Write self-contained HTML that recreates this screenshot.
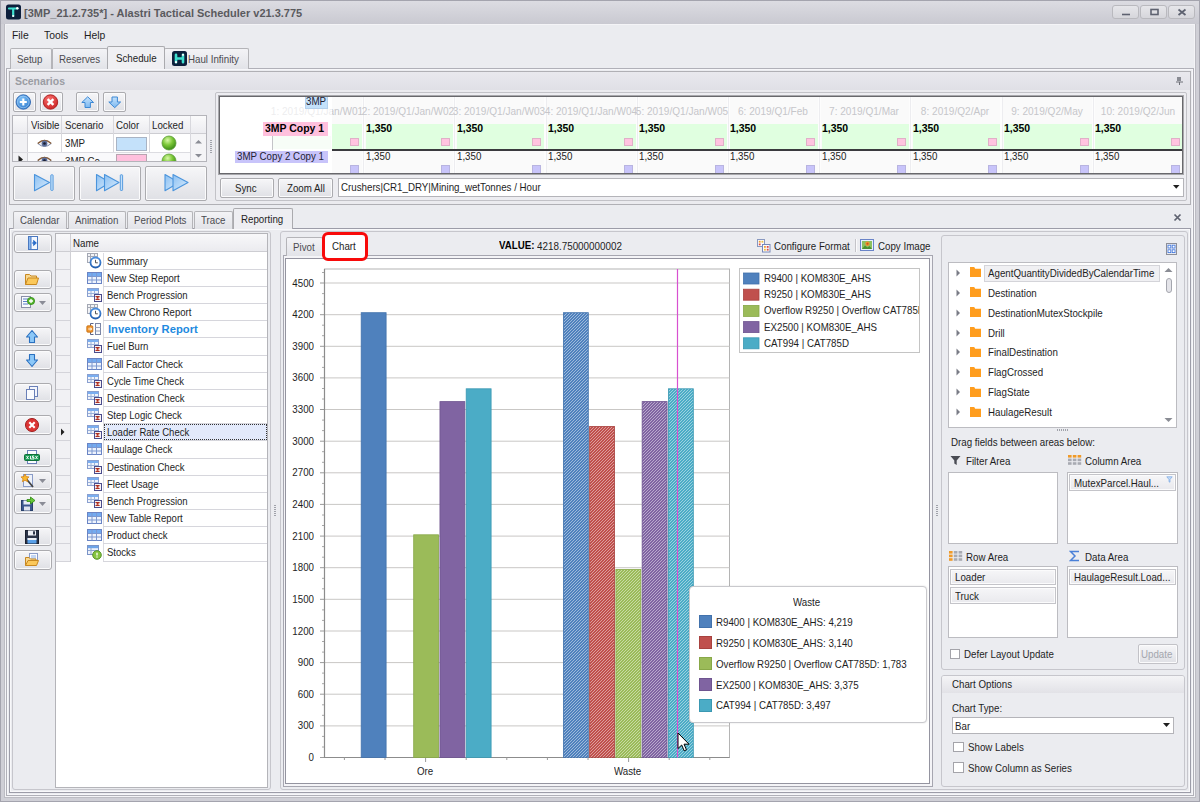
<!DOCTYPE html>
<html><head><meta charset="utf-8"><title>Alastri Tactical Scheduler</title>
<style>
*{box-sizing:border-box;margin:0;padding:0}
html,body{width:1200px;height:802px;overflow:hidden}
body{background:#e9eaee;font-family:"Liberation Sans",sans-serif;font-size:11px;color:#1e1e1e;position:relative}
.a{position:absolute}
.t{position:absolute;white-space:nowrap;line-height:14px;height:14px;transform:scaleX(.885);transform-origin:0 0}
.li{transform:scaleX(.868)}
.tb{font-weight:bold;transform:scaleX(.95)}
.m{font-size:11.5px;transform:scaleX(.9)}
.hd{font-size:11px;transform:scaleX(.915)}
.tab{position:absolute;border:1px solid #b4b4b8;border-bottom:none;background:linear-gradient(#f3f3f6,#e2e3e8);border-radius:2px 2px 0 0}
.tab.act{background:#f0f0f3;border-color:#aaaaae}
.btn{position:absolute;border:1px solid #ababaf;border-radius:2px;background:linear-gradient(#f6f6f8,#dfe0e5);box-shadow:inset 0 0 0 1px #fbfbfc}
.white{position:absolute;background:#fff;border:1px solid #b9b9bd}
.wb{top:5px;width:27px;height:14px;border:1px solid #b9b9be;border-radius:3px;background:linear-gradient(#e6e6ea,#d6d6db)}
.ax{text-align:right;transform-origin:100% 0}
.fld{border:1px solid #c4c4c9;background:linear-gradient(#f6f6f8,#e9e9ed);box-shadow:inset 0 0 0 1px #fbfbfc}
.cb{width:10.5px;height:10.5px;border:1px solid #a4a4aa;background:#fff}
</style></head><body>
<div class="a" style="left:0;top:0;width:1200px;height:802px;background:#cfcfd6;border:1px solid #a4a4ae"></div>
<div class="a" style="left:4px;top:23px;width:1192px;height:775px;background:#ebecf0;border:1px solid #bcbcc3;box-shadow:inset 0 0 0 1px #f4f4f7"></div>
<!-- title bar -->
<div class="a" style="left:0;top:0;width:1200px;height:24px;background:linear-gradient(#dcdce2,#c9c9d1);border:1px solid #a4a4ae;border-bottom:none"></div>
<svg class="a" style="left:6px;top:4px" width="15" height="16" viewBox="0 0 15 16"><rect x="0" y="0.5" width="15" height="15" rx="2.5" fill="#0d1f3c"/><path d="M3 4.5H11.5M7.2 4.5V12" stroke="#3fe0d0" stroke-width="2.2" stroke-linecap="round" fill="none"/><circle cx="11.3" cy="4.3" r="1.2" fill="#fff"/><circle cx="7.2" cy="12" r="1.1" fill="#fff"/></svg>
<div class="t" style="left:24px;top:6px;font-weight:bold;color:#5a5a5e;font-size:11px;transform:none">[3MP_21.2.735*] - Alastri Tactical Scheduler v21.3.775</div>
<div class="a wb" style="left:1112px"><svg width="26" height="14"><path d="M9 8.5h8" stroke="#5e6270" stroke-width="1.6"/></svg></div>
<div class="a wb" style="left:1140px"><svg width="26" height="14"><rect x="10" y="3.5" width="7" height="5" fill="none" stroke="#5e6270" stroke-width="1.6"/></svg></div>
<div class="a wb" style="left:1168px"><svg width="26" height="14"><path d="M9.5 3.5l7 5.5M16.5 3.5l-7 5.5" stroke="#5e6270" stroke-width="1.8"/></svg></div>
<!-- menu -->
<div class="t m" style="left:12px;top:27.500px">File</div>
<div class="t m" style="left:44px;top:27.500px">Tools</div>
<div class="t m" style="left:84px;top:27.500px">Help</div>
<!-- main tabs -->
<div class="a" style="left:6px;top:68px;width:1188px;height:728px;border:1px solid #b0b0b8;background:#ebecf0;box-shadow:inset 0 0 0 1px #f6f6f9"></div>
<div class="tab" style="left:10px;top:48px;width:42px;height:21px"></div><div class="t" style="left:17px;top:52px;color:#4b4b50">Setup</div>
<div class="tab" style="left:52px;top:48px;width:56px;height:21px"></div><div class="t" style="left:59px;top:52px;color:#4b4b50">Reserves</div>
<div class="tab" style="left:164px;top:48px;width:85px;height:21px"></div>
<svg class="a" style="left:172px;top:51px" width="15" height="15" viewBox="0 0 15 15"><rect width="15" height="15" rx="2.5" fill="#0d1f3c"/><path d="M4 3.8v7.4M11 3.8v7.4M4 7.5h7" stroke="#3fe0d0" stroke-width="2.600" stroke-linecap="round" fill="none"/><circle cx="11" cy="3.800" r="1.100" fill="#fff"/><circle cx="4" cy="11.200" r="1.100" fill="#fff"/></svg>
<div class="t" style="left:188px;top:52px;color:#4b4b50">Haul Infinity</div>
<div class="tab act" style="left:107px;top:46px;width:58px;height:23px"></div><div class="t" style="left:116px;top:51px">Schedule</div>
<!-- scenarios dock panel -->
<div class="a" style="left:9px;top:71px;width:1182px;height:134px;border:1px solid #b0b0b5;background:#ebebef"></div>
<div class="a" style="left:10px;top:72px;width:1180px;height:18px;background:linear-gradient(#e9e9ee,#e0e0e6)"></div>
<div class="t tb" style="left:15px;top:74px;color:#9a9ca3">Scenarios</div>
<svg class="a" style="left:1174.500px;top:76px" width="9" height="10"><rect x="2" y="1" width="4" height="4" fill="#8a8c94"/><path d="M1 6h7M4.5 6v3" stroke="#6e7078" stroke-width="1"/></svg>
<!-- small buttons -->
<svg width="0" height="0" style="position:absolute"><defs>
<linearGradient id="ab" x1="0" y1="0" x2="0" y2="1"><stop offset="0" stop-color="#c4e2fc"/><stop offset="1" stop-color="#7cb8f0"/></linearGradient>
<linearGradient id="pb" x1="0" y1="0" x2="1" y2="1"><stop offset="0" stop-color="#8cc0f2"/><stop offset="1" stop-color="#d8ecfd"/></linearGradient>
<radialGradient id="bl" cx=".4" cy=".3" r=".8"><stop offset="0" stop-color="#7cc0f8"/><stop offset="1" stop-color="#2a74c8"/></radialGradient>
<radialGradient id="rd" cx=".4" cy=".3" r=".8"><stop offset="0" stop-color="#f87070"/><stop offset="1" stop-color="#c81c1c"/></radialGradient>
<radialGradient id="gg" cx=".4" cy=".3" r=".7"><stop offset="0" stop-color="#d8f8a8"/><stop offset=".5" stop-color="#7cc838"/><stop offset="1" stop-color="#3c8c18"/></radialGradient>
</defs></svg>
<div class="btn" style="left:13px;top:92px;width:23px;height:20px"></div>
<svg class="a" style="left:15px;top:94px" width="17" height="17" viewBox="0 0 17 17"><circle cx="8.300" cy="8" r="7.200" fill="url(#bl)" stroke="#2a64b0" stroke-width=".9"/><circle cx="8.300" cy="8" r="5.800" fill="none" stroke="#b8dcfc" stroke-width=".7" opacity=".8"/><path d="M4.800 8h7M8.300 4.500v7" stroke="#fff" stroke-width="2.100"/></svg>
<div class="btn" style="left:40px;top:92px;width:23px;height:20px"></div>
<svg class="a" style="left:42px;top:94px" width="17" height="17" viewBox="0 0 17 17"><circle cx="8.500" cy="8" r="7.200" fill="url(#rd)" stroke="#a81818" stroke-width=".9"/><path d="M5.600 5.100l5.800 5.800M11.400 5.100l-5.800 5.800" stroke="#fff" stroke-width="2.300"/></svg>
<div class="btn" style="left:76px;top:92px;width:23px;height:20px"></div>
<svg class="a" style="left:81px;top:96px" width="14" height="13" viewBox="0 0 14 13"><path d="M6.700 .8L12.600 6.500H9.400V11.500H4V6.500H.8Z" fill="url(#ab)" stroke="#3c88d4" stroke-width="1" stroke-linejoin="round"/></svg>
<div class="btn" style="left:103px;top:92px;width:23px;height:20px"></div>
<svg class="a" style="left:108px;top:96px" width="14" height="13" viewBox="0 0 14 13"><path d="M6.700 11.700L12.600 6H9.400V1H4V6H.8Z" fill="url(#ab)" stroke="#3c88d4" stroke-width="1" stroke-linejoin="round"/></svg>
<!-- scenario grid -->
<div class="a" style="left:12px;top:115px;width:195px;height:46.500px;border:1px solid #b4b4ba;background:#fff;overflow:hidden">
 <div class="a" style="left:0;top:0;width:193px;height:18px;background:linear-gradient(#fafafb,#ececf0);border-bottom:1px solid #cdcdd2"></div>
 <div class="a" style="left:0;top:18px;width:14px;height:30px;background:#f1f1f4"></div>
 <div class="a" style="left:14px;top:0;width:1px;height:47px;background:#d0d0d5"></div>
 <div class="a" style="left:48px;top:0;width:1px;height:47px;background:#d8d8dd"></div>
 <div class="a" style="left:100px;top:0;width:1px;height:47px;background:#d8d8dd"></div>
 <div class="a" style="left:136px;top:0;width:1px;height:47px;background:#d8d8dd"></div>
 <div class="a" style="left:177px;top:0;width:1px;height:47px;background:#d8d8dd"></div>
 <div class="a" style="left:0;top:35.500px;width:177px;height:1px;background:#dcdce1"></div>
 <div class="a" style="left:178px;top:18px;width:15px;height:29px;background:#f4f4f6"></div>
 <div class="a" style="left:15px;top:36.500px;width:162px;height:11px;background:#f9f9fb"></div>
 <div class="t" style="left:18px;top:2px">Visible</div>
 <div class="t" style="left:52px;top:2px">Scenario</div>
 <div class="t" style="left:103px;top:2px">Color</div>
 <div class="t" style="left:139px;top:2px">Locked</div>
 <div class="t" style="left:52px;top:20px">3MP</div>
 <div class="t" style="left:52px;top:37.500px">3MP Co...</div>
 <div class="a" style="left:103px;top:20.500px;width:31px;height:14px;background:#c4e1fa;border:1px solid #a9b4c4"></div>
 <div class="a" style="left:103px;top:38px;width:31px;height:14px;background:#ffc0dd;border:1px solid #b8a4b0"></div>
 <svg class="a" style="left:24px;top:21.500px" width="15" height="11" viewBox="0 0 15 11"><path d="M.8 5.500Q7.500 -.8 14.200 5.500Q7.500 11.500 .8 5.500Z" fill="#f4f4f8" stroke="#7a88a8" stroke-width="1"/><path d="M.8 5.500Q7.500 -.8 14.200 5.500" fill="none" stroke="#8a5c34" stroke-width="1.300"/><circle cx="7.500" cy="5.500" r="2.900" fill="#5a6c98"/><circle cx="7.500" cy="5.500" r="1.300" fill="#1a1e30"/></svg>
 <svg class="a" style="left:24px;top:39px" width="15" height="11" viewBox="0 0 15 11"><path d="M.8 5.500Q7.500 -.8 14.200 5.500Q7.500 11.500 .8 5.500Z" fill="#f4f4f8" stroke="#7a88a8" stroke-width="1"/><path d="M.8 5.500Q7.500 -.8 14.200 5.500" fill="none" stroke="#8a5c34" stroke-width="1.300"/><circle cx="7.500" cy="5.500" r="2.900" fill="#5a6c98"/><circle cx="7.500" cy="5.500" r="1.300" fill="#1a1e30"/></svg>
 <svg class="a" style="left:148px;top:19px" width="16" height="16"><circle cx="8" cy="8" r="7" fill="url(#gg)" stroke="#5c9c38" stroke-width=".8"/></svg>
 <svg class="a" style="left:148px;top:36.500px" width="16" height="16"><circle cx="8" cy="8" r="7" fill="url(#gg)" stroke="#5c9c38" stroke-width=".8"/></svg>
 <svg class="a" style="left:4px;top:38.500px" width="8" height="9"><path d="M1.500 .5L6 4.500L1.500 8.500Z" fill="#222"/></svg>
 <svg class="a" style="left:181px;top:21px" width="9" height="24"><path d="M1 6.500L4.500 3L8 6.500Z" fill="#8a8c94"/><path d="M1 17L4.500 20.500L8 17Z" fill="#8a8c94"/></svg>
</div>
<!-- big play buttons -->
<div class="btn" style="left:13px;top:165.500px;width:62px;height:35.500px"></div>
<svg class="a" style="left:13px;top:166px" width="62" height="34" viewBox="0 0 62 34"><path d="M21.500 8.500L36.500 16.500L21.500 24.700Z" fill="url(#pb)" stroke="#4a94dc" stroke-width="1.100" stroke-linejoin="round"/><rect x="37.800" y="8.800" width="2.300" height="15.600" rx=".6" fill="#c4e0fa" stroke="#4a94dc" stroke-width=".9"/></svg>
<div class="btn" style="left:78.500px;top:165.500px;width:62.500px;height:35.500px"></div>
<svg class="a" style="left:79px;top:166px" width="62" height="34" viewBox="0 0 62 34"><path d="M17.500 8.500L31 16.500L17.500 24.700Z" fill="url(#pb)" stroke="#4a94dc" stroke-width="1.100" stroke-linejoin="round"/><path d="M25.500 8.500L40 16.500L25.500 24.700Z" fill="url(#pb)" stroke="#4a94dc" stroke-width="1.100" stroke-linejoin="round"/><rect x="41.300" y="8.800" width="2.300" height="15.600" rx=".6" fill="#c4e0fa" stroke="#4a94dc" stroke-width=".9"/></svg>
<div class="btn" style="left:144.500px;top:165.500px;width:62.500px;height:35.500px"></div>
<svg class="a" style="left:145px;top:166px" width="62" height="34" viewBox="0 0 62 34"><path d="M20 8.500L34 16.500L20 24.700Z" fill="url(#pb)" stroke="#4a94dc" stroke-width="1.100" stroke-linejoin="round"/><path d="M28 8.500L43 16.500L28 24.700Z" fill="url(#pb)" stroke="#4a94dc" stroke-width="1.100" stroke-linejoin="round"/></svg>
<!-- splitter dots -->
<div class="a" style="left:210px;top:140px;width:2px;height:13px;background:repeating-linear-gradient(#a0a2aa 0 1px,transparent 1px 2px)"></div>
<!-- right box -->
<div class="a" style="left:215px;top:92px;width:972px;height:109px;border:1px solid #c2c2c7;background:#ededf1;border-radius:2px"></div>
<div class="a" id="tl" style="left:218px;top:95px;width:966px;height:80px;border:1px solid #a8a8ac;background:#fff;overflow:hidden">
<div class="a" style="left:112.5px;top:1.0px;width:853.0px;height:76px;background:#fafafa;"></div>
<div class="a" style="left:112.5px;top:28.0px;width:30.5px;height:24.5px;background:#e0ffe0;"></div>
<div class="a" style="left:143.0px;top:1.0px;width:3.0px;height:76px;background:#fdfdfd;"></div>
<div class="a" style="left:144.2px;top:1.0px;width:1.0px;height:76px;background:#ededf0;"></div>
<div class="a" style="left:146.5px;top:28.0px;width:87.7px;height:24.5px;background:#e0ffe0;"></div>
<div class="a" style="left:234.2px;top:1.0px;width:3.0px;height:76px;background:#fdfdfd;"></div>
<div class="a" style="left:235.4px;top:1.0px;width:1.0px;height:76px;background:#ededf0;"></div>
<div class="a" style="left:237.7px;top:28.0px;width:87.7px;height:24.5px;background:#e0ffe0;"></div>
<div class="a" style="left:325.4px;top:1.0px;width:3.0px;height:76px;background:#fdfdfd;"></div>
<div class="a" style="left:326.6px;top:1.0px;width:1.0px;height:76px;background:#ededf0;"></div>
<div class="a" style="left:328.9px;top:28.0px;width:87.7px;height:24.5px;background:#e0ffe0;"></div>
<div class="a" style="left:416.6px;top:1.0px;width:3.0px;height:76px;background:#fdfdfd;"></div>
<div class="a" style="left:417.8px;top:1.0px;width:1.0px;height:76px;background:#ededf0;"></div>
<div class="a" style="left:420.1px;top:28.0px;width:87.7px;height:24.5px;background:#e0ffe0;"></div>
<div class="a" style="left:507.8px;top:1.0px;width:3.0px;height:76px;background:#fdfdfd;"></div>
<div class="a" style="left:509.0px;top:1.0px;width:1.0px;height:76px;background:#ededf0;"></div>
<div class="a" style="left:511.3px;top:28.0px;width:87.7px;height:24.5px;background:#e0ffe0;"></div>
<div class="a" style="left:599.0px;top:1.0px;width:3.0px;height:76px;background:#fdfdfd;"></div>
<div class="a" style="left:600.2px;top:1.0px;width:1.0px;height:76px;background:#ededf0;"></div>
<div class="a" style="left:602.5px;top:28.0px;width:87.7px;height:24.5px;background:#e0ffe0;"></div>
<div class="a" style="left:690.2px;top:1.0px;width:3.0px;height:76px;background:#fdfdfd;"></div>
<div class="a" style="left:691.4px;top:1.0px;width:1.0px;height:76px;background:#ededf0;"></div>
<div class="a" style="left:693.7px;top:28.0px;width:87.7px;height:24.5px;background:#e0ffe0;"></div>
<div class="a" style="left:781.4px;top:1.0px;width:3.0px;height:76px;background:#fdfdfd;"></div>
<div class="a" style="left:782.6px;top:1.0px;width:1.0px;height:76px;background:#ededf0;"></div>
<div class="a" style="left:784.9px;top:28.0px;width:87.7px;height:24.5px;background:#e0ffe0;"></div>
<div class="a" style="left:872.6px;top:1.0px;width:3.0px;height:76px;background:#fdfdfd;"></div>
<div class="a" style="left:873.8px;top:1.0px;width:1.0px;height:76px;background:#ededf0;"></div>
<div class="a" style="left:876.1px;top:28.0px;width:87.7px;height:24.5px;background:#e0ffe0;"></div>
<div class="a" style="left:963.8px;top:1.0px;width:3.0px;height:76px;background:#fdfdfd;"></div>
<div class="a" style="left:965.0px;top:1.0px;width:1.0px;height:76px;background:#ededf0;"></div>
<div class="a" style="left:967.3px;top:28.0px;width:87.7px;height:24.5px;background:#e0ffe0;"></div>
<div class="a" style="left:1055.0px;top:1.0px;width:3.0px;height:76px;background:#fdfdfd;"></div>
<div class="a" style="left:1056.2px;top:1.0px;width:1.0px;height:76px;background:#ededf0;"></div>
<div class="t tb" style="left:146.5px;top:25px;color:#000">1,350</div>
<div class="t" style="left:146.5px;top:53px;color:#222">1,350</div>
<div class="t tb" style="left:237.7px;top:25px;color:#000">1,350</div>
<div class="t" style="left:237.7px;top:53px;color:#222">1,350</div>
<div class="t tb" style="left:328.9px;top:25px;color:#000">1,350</div>
<div class="t" style="left:328.9px;top:53px;color:#222">1,350</div>
<div class="t tb" style="left:420.1px;top:25px;color:#000">1,350</div>
<div class="t" style="left:420.1px;top:53px;color:#222">1,350</div>
<div class="t tb" style="left:511.3px;top:25px;color:#000">1,350</div>
<div class="t" style="left:511.3px;top:53px;color:#222">1,350</div>
<div class="t tb" style="left:602.5px;top:25px;color:#000">1,350</div>
<div class="t" style="left:602.5px;top:53px;color:#222">1,350</div>
<div class="t tb" style="left:693.7px;top:25px;color:#000">1,350</div>
<div class="t" style="left:693.7px;top:53px;color:#222">1,350</div>
<div class="t tb" style="left:784.9px;top:25px;color:#000">1,350</div>
<div class="t" style="left:784.9px;top:53px;color:#222">1,350</div>
<div class="t tb" style="left:876.1px;top:25px;color:#000">1,350</div>
<div class="t" style="left:876.1px;top:53px;color:#222">1,350</div>
<div class="t tb" style="left:967.3px;top:25px;color:#000">1,350</div>
<div class="t" style="left:967.3px;top:53px;color:#222">1,350</div>
<div class="a" style="left:131.0px;top:41.5px;width:9.0px;height:8.5px;background:#ffc4e0;border:1px solid #e0b0c8"></div>
<div class="a" style="left:131.0px;top:68.5px;width:9.0px;height:10px;background:#c8c4fa;border:1px solid #b8b4e0"></div>
<div class="a" style="left:222.2px;top:41.5px;width:9.0px;height:8.5px;background:#ffc4e0;border:1px solid #e0b0c8"></div>
<div class="a" style="left:222.2px;top:68.5px;width:9.0px;height:10px;background:#c8c4fa;border:1px solid #b8b4e0"></div>
<div class="a" style="left:313.4px;top:41.5px;width:9.0px;height:8.5px;background:#ffc4e0;border:1px solid #e0b0c8"></div>
<div class="a" style="left:313.4px;top:68.5px;width:9.0px;height:10px;background:#c8c4fa;border:1px solid #b8b4e0"></div>
<div class="a" style="left:404.6px;top:41.5px;width:9.0px;height:8.5px;background:#ffc4e0;border:1px solid #e0b0c8"></div>
<div class="a" style="left:404.6px;top:68.5px;width:9.0px;height:10px;background:#c8c4fa;border:1px solid #b8b4e0"></div>
<div class="a" style="left:495.8px;top:41.5px;width:9.0px;height:8.5px;background:#ffc4e0;border:1px solid #e0b0c8"></div>
<div class="a" style="left:495.8px;top:68.5px;width:9.0px;height:10px;background:#c8c4fa;border:1px solid #b8b4e0"></div>
<div class="a" style="left:587.0px;top:41.5px;width:9.0px;height:8.5px;background:#ffc4e0;border:1px solid #e0b0c8"></div>
<div class="a" style="left:587.0px;top:68.5px;width:9.0px;height:10px;background:#c8c4fa;border:1px solid #b8b4e0"></div>
<div class="a" style="left:678.2px;top:41.5px;width:9.0px;height:8.5px;background:#ffc4e0;border:1px solid #e0b0c8"></div>
<div class="a" style="left:678.2px;top:68.5px;width:9.0px;height:10px;background:#c8c4fa;border:1px solid #b8b4e0"></div>
<div class="a" style="left:769.4px;top:41.5px;width:9.0px;height:8.5px;background:#ffc4e0;border:1px solid #e0b0c8"></div>
<div class="a" style="left:769.4px;top:68.5px;width:9.0px;height:10px;background:#c8c4fa;border:1px solid #b8b4e0"></div>
<div class="a" style="left:860.6px;top:41.5px;width:9.0px;height:8.5px;background:#ffc4e0;border:1px solid #e0b0c8"></div>
<div class="a" style="left:860.6px;top:68.5px;width:9.0px;height:10px;background:#c8c4fa;border:1px solid #b8b4e0"></div>
<div class="a" style="left:951.8px;top:41.5px;width:9.0px;height:8.5px;background:#ffc4e0;border:1px solid #e0b0c8"></div>
<div class="a" style="left:951.8px;top:68.5px;width:9.0px;height:10px;background:#c8c4fa;border:1px solid #b8b4e0"></div>
<div class="a" style="left:1043.0px;top:41.5px;width:9.0px;height:8.5px;background:#ffc4e0;border:1px solid #e0b0c8"></div>
<div class="a" style="left:1043.0px;top:68.5px;width:9.0px;height:10px;background:#c8c4fa;border:1px solid #b8b4e0"></div>
<div class="a" style="left:112.5px;top:53.0px;width:853.0px;height:1.5px;background:#3a3a3e;"></div>
<div class="a" style="left:54.0px;top:40.0px;width:58.0px;height:13px;background:#f7fdf7;"></div>
<div class="a" style="left:53.0px;top:40.0px;width:1.0px;height:14px;background:#c4c4c8;"></div>
<div class="t hd" style="left:27.9px;width:140px;text-align:center;transform-origin:50% 0;top:7.5px;color:#c6c6ca">1: 2019/Q1/Jan/W01</div>
<div class="t hd" style="left:119.1px;width:140px;text-align:center;transform-origin:50% 0;top:7.5px;color:#c6c6ca">2: 2019/Q1/Jan/W02</div>
<div class="t hd" style="left:210.3px;width:140px;text-align:center;transform-origin:50% 0;top:7.5px;color:#c6c6ca">3: 2019/Q1/Jan/W03</div>
<div class="t hd" style="left:301.5px;width:140px;text-align:center;transform-origin:50% 0;top:7.5px;color:#c6c6ca">4: 2019/Q1/Jan/W04</div>
<div class="t hd" style="left:392.7px;width:140px;text-align:center;transform-origin:50% 0;top:7.5px;color:#c6c6ca">5: 2019/Q1/Jan/W05</div>
<div class="t hd" style="left:483.9px;width:140px;text-align:center;transform-origin:50% 0;top:7.5px;color:#c6c6ca">6: 2019/Q1/Feb</div>
<div class="t hd" style="left:575.1px;width:140px;text-align:center;transform-origin:50% 0;top:7.5px;color:#c6c6ca">7: 2019/Q1/Mar</div>
<div class="t hd" style="left:666.3px;width:140px;text-align:center;transform-origin:50% 0;top:7.5px;color:#c6c6ca">8: 2019/Q2/Apr</div>
<div class="t hd" style="left:757.5px;width:140px;text-align:center;transform-origin:50% 0;top:7.5px;color:#c6c6ca">9: 2019/Q2/May</div>
<div class="t hd" style="left:848.7px;width:140px;text-align:center;transform-origin:50% 0;top:7.5px;color:#c6c6ca">10: 2019/Q2/Jun</div>
<div class="a" style="left:2.0px;top:2.0px;width:110.5px;height:20px;background:rgba(255,255,255,.68);"></div>
<div class="a" style="left:85.5px;top:0.0px;width:23.5px;height:12.5px;background:#c4e1fa;border:1px solid #b4d0ec"></div>
<div class="t" style="left:87px;top:-2px;color:#223">3MP</div>
<div class="a" style="left:44.0px;top:26.0px;width:65.0px;height:13.5px;background:#ffc0dd;"></div>
<div class="t tb" style="left:45.5px;top:25px;color:#000">3MP Copy 1</div>
<div class="a" style="left:16.0px;top:54.5px;width:93.0px;height:12.7px;background:#c8c4fa;"></div>
<div class="t" style="left:18px;top:53px;color:#223">3MP Copy 2 Copy 1</div>
<div class="a" style="left:0;top:0;width:964px;height:78px;border:1px solid #68686c"></div>
</div>
<div class="btn" style="left:220px;top:178px;width:54px;height:20px"></div><div class="t" style="left:235px;top:181px">Sync</div>
<div class="btn" style="left:278px;top:178px;width:55px;height:20px"></div><div class="t" style="left:287px;top:181px">Zoom All</div>
<div class="white" style="left:338px;top:178px;width:846px;height:18.500px;border-color:#b4b4b9"></div>
<div class="t" style="left:341px;top:180px">Crushers|CR1_DRY|Mining_wetTonnes / Hour</div>
<svg class="a" style="left:1173px;top:185px" width="7" height="4"><path d="M0 0h6.500L3.250 3.700Z" fill="#1e1e1e"/></svg>

<!-- lower tabs -->
<div class="a" style="left:9px;top:228px;width:1182px;height:565px;border:1px solid #9c9ca8;background:#ebecf0;box-shadow:inset 0 0 0 1px #f8f8fa"></div>
<div class="tab" style="left:13px;top:211px;width:54px;height:18px"></div><div class="t" style="left:20px;top:213px;color:#4b4b50">Calendar</div>
<div class="tab" style="left:68px;top:211px;width:58px;height:18px"></div><div class="t" style="left:75px;top:213px;color:#4b4b50">Animation</div>
<div class="tab" style="left:127px;top:211px;width:66px;height:18px"></div><div class="t" style="left:134px;top:213px;color:#4b4b50">Period Plots</div>
<div class="tab" style="left:194px;top:211px;width:39px;height:18px"></div><div class="t" style="left:201px;top:213px;color:#4b4b50">Trace</div>
<div class="tab act" style="left:233px;top:208px;width:60px;height:21px;background:#eeeef2"></div><div class="t" style="left:241px;top:212px">Reporting</div>
<svg class="a" style="left:1173px;top:213px" width="9" height="9"><path d="M1.5 1.5l6 6M7.5 1.5l-6 6" stroke="#5e6270" stroke-width="1.7"/></svg>
<svg width="0" height="0" style="position:absolute">
<defs>
<linearGradient id="clk" x1="0" y1="0" x2="0" y2="1"><stop offset="0" stop-color="#4a8ee0"/><stop offset="1" stop-color="#2460b0"/></linearGradient>
<symbol id="i-clock" viewBox="0 0 16 16"><rect x="1.5" y="0.5" width="10" height="9" fill="#f2f3f6" stroke="#a4a8b4"/><path d="M1.5 3.5h10M4.5 .5v9M8.5 .5v3" stroke="#a4a8b4" stroke-width="1" fill="none"/><circle cx="9.5" cy="9.5" r="5" fill="#fff" stroke="url(#clk)" stroke-width="1.8"/><path d="M9.5 6.8v3h2.3" stroke="#555" stroke-width="1" fill="none"/></symbol>
<symbol id="i-grid" viewBox="0 0 16 16"><rect x="1.500" y="2.500" width="14" height="11" fill="#eef3fc" stroke="#6a84c4"/><rect x="2" y="3" width="13" height="3" fill="#72aaf0"/><path d="M2 6.500h13M2 10h13M6 3v10.500M10.500 3v10.500" stroke="#7c98d0" stroke-width="1" fill="none"/></symbol>
<symbol id="i-sigma" viewBox="0 0 16 16"><rect x="1.500" y="1.500" width="11" height="8" fill="#f0f4fb" stroke="#8aa0d0"/><rect x="2" y="2" width="10" height="2" fill="#7aaef0"/><path d="M2 6.500h10M5 4v5.500M8.500 4v3" stroke="#9ab0d8" stroke-width="1" fill="none"/><rect x="8.500" y="7.500" width="7" height="7" fill="#f6f2f4" stroke="#4a4c8c"/><path d="M13.600 9.600h-3.200l1.700 1.400l-1.700 1.500h3.200" stroke="#b03020" stroke-width="1.100" fill="none"/></symbol>
<symbol id="i-inv" viewBox="0 0 16 16"><rect x="9.500" y="2.500" width="5" height="11" fill="#f8f9fc" stroke="#7a84a4"/><path d="M9.500 6.500h5M9.500 10h5" stroke="#9aa2bc" stroke-width="1"/><path d="M7.500 2.500h-3v11h3" fill="none" stroke="#5a6488"/><rect x=".8" y="4.800" width="6" height="6.400" rx="1" fill="#f0952c" stroke="#c06a10" stroke-width=".8"/><path d="M2.300 8h3M4.300 6.600L5.700 8L4.300 9.400" stroke="#fff" stroke-width="1" fill="none"/></symbol>
<symbol id="i-stock" viewBox="0 0 16 16"><rect x="1.500" y="1.500" width="11" height="9" fill="#eef2fa" stroke="#7a94c8"/><rect x="2" y="2" width="10" height="2.2" fill="#6ea4e8"/><path d="M2 6.500h10M5 4v6" stroke="#8ea4d0" stroke-width="1" fill="none"/><circle cx="11" cy="11" r="4.300" fill="#86c440" stroke="#4c8c20" stroke-width=".9"/><path d="M11 8.800v2.700" stroke="#fff" stroke-width="1.300"/><circle cx="11" cy="13" r=".7" fill="#fff"/></symbol>
</defs></svg>

<!-- left toolbar + list -->
<div class="a" style="left:12px;top:231px;width:259px;height:558.500px;border:1px solid #c6c6cc;background:#ebecf0;border-radius:3px"></div>
<div class="btn" style="left:14px;top:233.75px;width:37.500px;height:19.300px;border-radius:3px"></div>
<div class="btn" style="left:14px;top:269.50px;width:37.500px;height:19.300px;border-radius:3px"></div>
<div class="btn" style="left:14px;top:292.80px;width:37.500px;height:19.300px;border-radius:3px"></div>
<div class="btn" style="left:14px;top:327.00px;width:37.500px;height:19.300px;border-radius:3px"></div>
<div class="btn" style="left:14px;top:350.30px;width:37.500px;height:19.300px;border-radius:3px"></div>
<div class="btn" style="left:14px;top:382.90px;width:37.500px;height:19.300px;border-radius:3px"></div>
<div class="btn" style="left:14px;top:415.40px;width:37.500px;height:19.300px;border-radius:3px"></div>
<div class="btn" style="left:14px;top:447.60px;width:37.500px;height:19.300px;border-radius:3px"></div>
<div class="btn" style="left:14px;top:471.00px;width:37.500px;height:19.300px;border-radius:3px"></div>
<div class="btn" style="left:14px;top:494.30px;width:37.500px;height:19.300px;border-radius:3px"></div>
<div class="btn" style="left:14px;top:527.20px;width:37.500px;height:19.300px;border-radius:3px"></div>
<div class="btn" style="left:14px;top:550.40px;width:37.500px;height:19.300px;border-radius:3px"></div>
<!--ICONS-->
<svg class="a" style="left:24px;top:235.35px" width="16" height="16" viewBox="0 0 16 16"><rect x="4.5" y="1.5" width="9" height="13" fill="#f4f8fe" stroke="#4a78c0"/><rect x="4.5" y="1.5" width="2.5" height="13" fill="#8ab8f0" stroke="#4a78c0"/><path d="M8 8h2.5M9.800 6l2.200 2l-2.200 2z" stroke="#2a6cc8" stroke-width="1.2" fill="#2a6cc8"/></svg>
<svg class="a" style="left:24px;top:271.10px" width="16" height="16" viewBox="0 0 16 16"><path d="M1.500 13.500V3.500h4l1.500 1.500h5.500v2" fill="#f8d890" stroke="#c88820"/><path d="M1.500 13.500L4 7h10.500L12.500 13.500Z" fill="#fbc85a" stroke="#c88820" stroke-linejoin="round"/></svg>
<svg class="a" style="left:20px;top:294.40px" width="16" height="16" viewBox="0 0 16 16"><rect x="1.500" y="2.500" width="9" height="11" fill="#fafbfe" stroke="#8a90a8"/><path d="M3 5h5M3 7.500h4M3 10h5" stroke="#5a80c8" stroke-width="1"/><circle cx="11" cy="7" r="3.600" fill="#58b830" stroke="#2c8810" stroke-width=".8"/><path d="M9 7h4M11 5v4" stroke="#fff" stroke-width="1.300"/></svg>
<svg class="a" style="left:39px;top:300.80px" width="7" height="4"><path d="M0 0h7L3.500 4Z" fill="#8a8c96"/></svg>
<svg class="a" style="left:24px;top:328.60px" width="16" height="16" viewBox="0 0 16 16"><path d="M8 1.500L13.500 8H10.500V13.500H5.500V8H2.500Z" fill="#8cc8f8" stroke="#2a70c0" stroke-width="1.100" stroke-linejoin="round"/></svg>
<svg class="a" style="left:24px;top:351.90px" width="16" height="16" viewBox="0 0 16 16"><path d="M8 14.500L13.500 8H10.500V2.500H5.500V8H2.500Z" fill="#8cc8f8" stroke="#2a70c0" stroke-width="1.100" stroke-linejoin="round"/></svg>
<svg class="a" style="left:24px;top:384.50px" width="16" height="16" viewBox="0 0 16 16"><rect x="5.500" y="1.500" width="8" height="10" fill="#f4f6fc" stroke="#6a80b8"/><rect x="2.500" y="4.500" width="8" height="10" fill="#fafbfe" stroke="#6a80b8"/></svg>
<svg class="a" style="left:24px;top:417.00px" width="16" height="16" viewBox="0 0 16 16"><circle cx="8" cy="8" r="6.500" fill="#dc3434" stroke="#a01c1c"/><path d="M5.300 5.300l5.400 5.400M10.700 5.300l-5.400 5.400" stroke="#fff" stroke-width="2.100"/></svg>
<svg class="a" style="left:24px;top:449.20px" width="16" height="16" viewBox="0 0 16 16"><rect x="3.500" y="1.500" width="9" height="13" fill="#fafbfe" stroke="#6a80b8"/><rect x="0.500" y="5.500" width="15" height="6" rx="1" fill="#1e9c58" stroke="#107038"/><path d="M2.500 7l2 3M4.500 7l-2 3M6.500 7v3h2M10 7h-1.500v1.500h1.500v1.500h-1.500M11.500 7l2 3M13.500 7l-2 3" stroke="#fff" stroke-width=".9" fill="none"/></svg>
<svg class="a" style="left:20px;top:472.60px" width="16" height="16" viewBox="0 0 16 16"><rect x="3.500" y="1.500" width="9" height="12" fill="#eef2fa" stroke="#8a9cc8"/><path d="M6 5.500L13 14" stroke="#444" stroke-width="1.800"/><path d="M5 1l1.200 2.600l2.800.3l-2 2l.6 2.800L5 7.300L2.400 8.700l.6-2.800l-2-2l2.800-.3z" fill="#f8b830" stroke="#d07808" stroke-width=".7"/></svg>
<svg class="a" style="left:39px;top:479.00px" width="7" height="4"><path d="M0 0h7L3.500 4Z" fill="#8a8c96"/></svg>
<svg class="a" style="left:20px;top:495.90px" width="16" height="16" viewBox="0 0 16 16"><rect x="1.500" y="4.500" width="11" height="10" fill="#3c5890" stroke="#28406c"/><rect x="3.500" y="4.500" width="7" height="4" fill="#e8eef8"/><rect x="4" y="10.500" width="6" height="4" fill="#dfe4f0"/><path d="M7 5.500h3.500V8L15 4.500L10.500 1V3.500H7Z" fill="#68c838" stroke="#2c8810" stroke-width=".8" stroke-linejoin="round"/></svg>
<svg class="a" style="left:39px;top:502.30px" width="7" height="4"><path d="M0 0h7L3.500 4Z" fill="#8a8c96"/></svg>
<svg class="a" style="left:24px;top:528.80px" width="16" height="16" viewBox="0 0 16 16"><rect x="1.500" y="1.500" width="13" height="13" fill="#2c3448" stroke="#1a2030"/><rect x="4" y="1.500" width="8" height="5" fill="#eef0f6"/><rect x="9" y="2.300" width="2" height="3.200" fill="#2c3448"/><rect x="3.500" y="9" width="9" height="5.500" fill="#5aa0e8"/><rect x="3.500" y="9" width="9" height="2" fill="#eef0f6"/></svg>
<svg class="a" style="left:24px;top:552.00px" width="16" height="16" viewBox="0 0 16 16"><rect x="5.500" y="1.500" width="8" height="8" fill="#fafbfe" stroke="#8a9cc8"/><path d="M7 4h5M7 6h5" stroke="#8ab0e8"/><path d="M1.500 13.500V5.500h3.500l1.500 1.500h5.500v1" fill="#f8d890" stroke="#c88820"/><path d="M1.500 13.500L4 8.500h10.500L12.500 13.500Z" fill="#fbc85a" stroke="#c88820" stroke-linejoin="round"/></svg>
<div class="a" style="left:55px;top:233px;width:213px;height:554.500px;border:1px solid #b4b4b9;background:#fff;overflow:hidden">
<div class="a" style="left:0.0px;top:0.0px;width:212.0px;height:18.0px;background:linear-gradient(#f8f8fa,#ebebef);border-bottom:1px solid #cdcdd2"></div>
<div class="a" style="left:0.0px;top:18.0px;width:14.0px;height:309.5px;background:#f1f1f4;"></div>
<div class="a" style="left:13.5px;top:0.0px;width:1.0px;height:327.5px;background:#d0d0d5;"></div>
<div class="t" style="left:17px;top:2px">Name</div>
<div class="a" style="left:0px;top:34.7px;width:14px;height:1px;background:#d4d4da"></div><div class="a" style="left:47px;top:34.7px;width:165px;height:1px;background:#d6d6dc"></div>
<div class="a" style="left:47px;top:18.5px;width:1.0px;height:16.2px;background:#dcdce1;"></div>
<svg class="a" style="left:30px;top:18.5px" width="16" height="16"><use href="#i-clock"/></svg>
<div class="t li" style="left:51px;top:19.5px">Summary</div>
<div class="a" style="left:0px;top:51.8px;width:14px;height:1px;background:#d4d4da"></div><div class="a" style="left:47px;top:51.8px;width:165px;height:1px;background:#d6d6dc"></div>
<div class="a" style="left:47px;top:35.7px;width:1.0px;height:16.2px;background:#dcdce1;"></div>
<svg class="a" style="left:30px;top:35.7px" width="16" height="16"><use href="#i-grid"/></svg>
<div class="t li" style="left:51px;top:36.7px">New Step Report</div>
<div class="a" style="left:0px;top:69.0px;width:14px;height:1px;background:#d4d4da"></div><div class="a" style="left:47px;top:69.0px;width:165px;height:1px;background:#d6d6dc"></div>
<div class="a" style="left:47px;top:52.8px;width:1.0px;height:16.2px;background:#dcdce1;"></div>
<svg class="a" style="left:30px;top:52.8px" width="16" height="16"><use href="#i-sigma"/></svg>
<div class="t li" style="left:51px;top:53.8px">Bench Progression</div>
<div class="a" style="left:0px;top:86.2px;width:14px;height:1px;background:#d4d4da"></div><div class="a" style="left:47px;top:86.2px;width:165px;height:1px;background:#d6d6dc"></div>
<div class="a" style="left:47px;top:70.0px;width:1.0px;height:16.2px;background:#dcdce1;"></div>
<svg class="a" style="left:30px;top:70.0px" width="16" height="16"><use href="#i-clock"/></svg>
<div class="t li" style="left:51px;top:71.0px">New Chrono Report</div>
<div class="a" style="left:0px;top:103.4px;width:14px;height:1px;background:#d4d4da"></div><div class="a" style="left:47px;top:103.4px;width:165px;height:1px;background:#d6d6dc"></div>
<div class="a" style="left:47px;top:87.2px;width:1.0px;height:16.2px;background:#dcdce1;"></div>
<svg class="a" style="left:30px;top:87.2px" width="16" height="16"><use href="#i-inv"/></svg>
<div class="t tb" style="left:51.5px;top:88.2px;color:#1e8ae0;transform:scaleX(1.02)">Inventory Report</div>
<div class="a" style="left:0px;top:120.5px;width:14px;height:1px;background:#d4d4da"></div><div class="a" style="left:47px;top:120.5px;width:165px;height:1px;background:#d6d6dc"></div>
<div class="a" style="left:47px;top:104.4px;width:1.0px;height:16.2px;background:#dcdce1;"></div>
<svg class="a" style="left:30px;top:104.4px" width="16" height="16"><use href="#i-sigma"/></svg>
<div class="t li" style="left:51px;top:105.4px">Fuel Burn</div>
<div class="a" style="left:0px;top:137.7px;width:14px;height:1px;background:#d4d4da"></div><div class="a" style="left:47px;top:137.7px;width:165px;height:1px;background:#d6d6dc"></div>
<div class="a" style="left:47px;top:121.5px;width:1.0px;height:16.2px;background:#dcdce1;"></div>
<svg class="a" style="left:30px;top:121.5px" width="16" height="16"><use href="#i-grid"/></svg>
<div class="t li" style="left:51px;top:122.5px">Call Factor Check</div>
<div class="a" style="left:0px;top:154.9px;width:14px;height:1px;background:#d4d4da"></div><div class="a" style="left:47px;top:154.9px;width:165px;height:1px;background:#d6d6dc"></div>
<div class="a" style="left:47px;top:138.7px;width:1.0px;height:16.2px;background:#dcdce1;"></div>
<svg class="a" style="left:30px;top:138.7px" width="16" height="16"><use href="#i-sigma"/></svg>
<div class="t li" style="left:51px;top:139.7px">Cycle Time Check</div>
<div class="a" style="left:0px;top:172.0px;width:14px;height:1px;background:#d4d4da"></div><div class="a" style="left:47px;top:172.0px;width:165px;height:1px;background:#d6d6dc"></div>
<div class="a" style="left:47px;top:155.9px;width:1.0px;height:16.2px;background:#dcdce1;"></div>
<svg class="a" style="left:30px;top:155.9px" width="16" height="16"><use href="#i-sigma"/></svg>
<div class="t li" style="left:51px;top:156.9px">Destination Check</div>
<div class="a" style="left:0px;top:189.2px;width:14px;height:1px;background:#d4d4da"></div><div class="a" style="left:47px;top:189.2px;width:165px;height:1px;background:#d6d6dc"></div>
<div class="a" style="left:47px;top:173.0px;width:1.0px;height:16.2px;background:#dcdce1;"></div>
<svg class="a" style="left:30px;top:173.0px" width="16" height="16"><use href="#i-sigma"/></svg>
<div class="t li" style="left:51px;top:174.0px">Step Logic Check</div>
<div class="a" style="left:0px;top:206.4px;width:14px;height:1px;background:#d4d4da"></div><div class="a" style="left:47px;top:206.4px;width:165px;height:1px;background:#d6d6dc"></div>
<div class="a" style="left:48.0px;top:190.2px;width:163.0px;height:16.2px;background:#e3eafb;border:1px dotted #333"></div>
<div class="a" style="left:47px;top:190.2px;width:1.0px;height:16.2px;background:#dcdce1;"></div>
<svg class="a" style="left:30px;top:190.2px" width="16" height="16"><use href="#i-sigma"/></svg>
<div class="t li" style="left:51px;top:191.2px">Loader Rate Check</div>
<div class="a" style="left:0px;top:223.5px;width:14px;height:1px;background:#d4d4da"></div><div class="a" style="left:47px;top:223.5px;width:165px;height:1px;background:#d6d6dc"></div>
<div class="a" style="left:47px;top:207.4px;width:1.0px;height:16.2px;background:#dcdce1;"></div>
<svg class="a" style="left:30px;top:207.4px" width="16" height="16"><use href="#i-grid"/></svg>
<div class="t li" style="left:51px;top:208.4px">Haulage Check</div>
<div class="a" style="left:0px;top:240.7px;width:14px;height:1px;background:#d4d4da"></div><div class="a" style="left:47px;top:240.7px;width:165px;height:1px;background:#d6d6dc"></div>
<div class="a" style="left:47px;top:224.5px;width:1.0px;height:16.2px;background:#dcdce1;"></div>
<svg class="a" style="left:30px;top:224.5px" width="16" height="16"><use href="#i-sigma"/></svg>
<div class="t li" style="left:51px;top:225.5px">Destination Check</div>
<div class="a" style="left:0px;top:257.9px;width:14px;height:1px;background:#d4d4da"></div><div class="a" style="left:47px;top:257.9px;width:165px;height:1px;background:#d6d6dc"></div>
<div class="a" style="left:47px;top:241.7px;width:1.0px;height:16.2px;background:#dcdce1;"></div>
<svg class="a" style="left:30px;top:241.7px" width="16" height="16"><use href="#i-sigma"/></svg>
<div class="t li" style="left:51px;top:242.7px">Fleet Usage</div>
<div class="a" style="left:0px;top:275.1px;width:14px;height:1px;background:#d4d4da"></div><div class="a" style="left:47px;top:275.1px;width:165px;height:1px;background:#d6d6dc"></div>
<div class="a" style="left:47px;top:258.9px;width:1.0px;height:16.2px;background:#dcdce1;"></div>
<svg class="a" style="left:30px;top:258.9px" width="16" height="16"><use href="#i-sigma"/></svg>
<div class="t li" style="left:51px;top:259.9px">Bench Progression</div>
<div class="a" style="left:0px;top:292.2px;width:14px;height:1px;background:#d4d4da"></div><div class="a" style="left:47px;top:292.2px;width:165px;height:1px;background:#d6d6dc"></div>
<div class="a" style="left:47px;top:276.1px;width:1.0px;height:16.2px;background:#dcdce1;"></div>
<svg class="a" style="left:30px;top:276.1px" width="16" height="16"><use href="#i-grid"/></svg>
<div class="t li" style="left:51px;top:277.1px">New Table Report</div>
<div class="a" style="left:0px;top:309.4px;width:14px;height:1px;background:#d4d4da"></div><div class="a" style="left:47px;top:309.4px;width:165px;height:1px;background:#d6d6dc"></div>
<div class="a" style="left:47px;top:293.2px;width:1.0px;height:16.2px;background:#dcdce1;"></div>
<svg class="a" style="left:30px;top:293.2px" width="16" height="16"><use href="#i-grid"/></svg>
<div class="t li" style="left:51px;top:294.2px">Product check</div>
<div class="a" style="left:0px;top:326.6px;width:14px;height:1px;background:#d4d4da"></div><div class="a" style="left:47px;top:326.6px;width:165px;height:1px;background:#d6d6dc"></div>
<div class="a" style="left:47px;top:310.4px;width:1.0px;height:16.2px;background:#dcdce1;"></div>
<svg class="a" style="left:30px;top:310.4px" width="16" height="16"><use href="#i-stock"/></svg>
<div class="t li" style="left:51px;top:311.4px">Stocks</div>
<svg class="a" style="left:4px;top:194px" width="6" height="8"><path d="M1 0.5L4.5 4L1 7.5Z" fill="#222"/></svg>
</div>
<div class="a" style="left:274px;top:505px;width:2px;height:11px;background:repeating-linear-gradient(#a0a2aa 0 1px,transparent 1px 2px)"></div>
<!-- chart panel -->
<div class="a" style="left:279.500px;top:231px;width:908px;height:558.500px;border:1px solid #c6c6cc;background:#ebecf0;border-radius:3px"></div>
<div class="a" style="left:283px;top:255px;width:650px;height:531.500px;border:1px solid #a6a6b0;background:#f4f4f7"></div>
<div class="a" style="left:285px;top:258px;width:645px;height:526px;border:1px solid #9494a0;background:#fff"></div>
<div class="tab" style="left:286px;top:237px;width:37px;height:19px"></div><div class="t" style="left:293px;top:240px;color:#4b4b50">Pivot</div>
<div class="a" style="left:323px;top:235px;width:43px;height:23px;background:#fff"></div>
<div class="a" style="left:321.5px;top:232px;width:46px;height:29px;border:3px solid #f80a0a;border-radius:6px"></div>
<div class="t" style="left:332px;top:239px">Chart</div>
<div class="t tb" style="left:499px;top:239px;font-size:10px;transform:scaleX(.97);color:#000">VALUE:</div>
<div class="t" style="left:536.500px;top:239px;transform:scaleX(.896)">4218.75000000002</div>
<svg class="a" style="left:757px;top:238.500px" width="14" height="14" viewBox="0 0 14 14"><rect x=".5" y=".5" width="7" height="7" fill="#fafbfe" stroke="#8898c0"/><rect x="1.800" y="1.800" width="1.800" height="1.800" fill="#f0a030"/><rect x="4.500" y="1.800" width="1.800" height="1.800" fill="#f0c040"/><rect x="1.800" y="4.500" width="1.800" height="1.800" fill="#e05040"/><rect x="5.500" y="5.500" width="7.500" height="7.500" fill="#fafbfe" stroke="#7888b8"/><rect x="7" y="7" width="1.800" height="1.800" fill="#f0a030"/><rect x="9.800" y="7" width="1.800" height="1.800" fill="#e04848"/><rect x="7" y="9.800" width="1.800" height="1.800" fill="#f0c040"/><rect x="9.800" y="9.800" width="1.800" height="1.800" fill="#e05040"/></svg>
<div class="t" style="left:774px;top:239px">Configure Format</div>
<div class="a" style="left:854.500px;top:239px;width:1px;height:13px;background:#c4c4c9"></div><div class="a" style="left:855.500px;top:239px;width:1px;height:13px;background:#fafafc"></div>
<svg class="a" style="left:860px;top:238.500px" width="14" height="12" viewBox="0 0 14 12"><rect x=".5" y=".5" width="13" height="11" fill="#e8f0fc" stroke="#6a84c8"/><rect x="2" y="2" width="10" height="8" fill="#8cc060"/><path d="M2 10l3-3.500l2.500 2l2-1.500l2.500 3z" fill="#4a9030"/><circle cx="7.500" cy="4.800" r="2.200" fill="#f09030"/><circle cx="7.500" cy="4.800" r="1" fill="#c05818"/></svg>
<div class="t" style="left:878px;top:239px">Copy Image</div>
<svg class="a" style="left:286px;top:258px" width="645" height="525" viewBox="0 0 645 525">
<defs><pattern id="hz" width="3" height="3" patternUnits="userSpaceOnUse" patternTransform="translate(0,-0.5)"><path d="M-1 1L1 -1M0 3L3 0M2 4L4 2" stroke="#fff" stroke-width="1" opacity=".45"/></pattern></defs><g transform="translate(0,0.5)">
<rect x="38.5" y="10.5" width="405.0" height="488.5" fill="#fff" stroke="#b4b4b4" stroke-width="1"/>
<path d="M34.0 499.0H38.5" stroke="#9a9a9a" stroke-width="1"/>
<path d="M36.0 488.5H38.5" stroke="#a8a8a8" stroke-width="1"/>
<path d="M36.0 477.9H38.5" stroke="#a8a8a8" stroke-width="1"/>
<path d="M38.5 467.4H443.5" stroke="#c9c7c5" stroke-width="1"/>
<path d="M34.0 467.4H38.5" stroke="#9a9a9a" stroke-width="1"/>
<path d="M36.0 456.8H38.5" stroke="#a8a8a8" stroke-width="1"/>
<path d="M36.0 446.3H38.5" stroke="#a8a8a8" stroke-width="1"/>
<path d="M38.5 435.7H443.5" stroke="#c9c7c5" stroke-width="1"/>
<path d="M34.0 435.7H38.5" stroke="#9a9a9a" stroke-width="1"/>
<path d="M36.0 425.2H38.5" stroke="#a8a8a8" stroke-width="1"/>
<path d="M36.0 414.6H38.5" stroke="#a8a8a8" stroke-width="1"/>
<path d="M38.5 404.1H443.5" stroke="#c9c7c5" stroke-width="1"/>
<path d="M34.0 404.1H38.5" stroke="#9a9a9a" stroke-width="1"/>
<path d="M36.0 393.6H38.5" stroke="#a8a8a8" stroke-width="1"/>
<path d="M36.0 383.0H38.5" stroke="#a8a8a8" stroke-width="1"/>
<path d="M38.5 372.5H443.5" stroke="#c9c7c5" stroke-width="1"/>
<path d="M34.0 372.5H38.5" stroke="#9a9a9a" stroke-width="1"/>
<path d="M36.0 361.9H38.5" stroke="#a8a8a8" stroke-width="1"/>
<path d="M36.0 351.4H38.5" stroke="#a8a8a8" stroke-width="1"/>
<path d="M38.5 340.8H443.5" stroke="#c9c7c5" stroke-width="1"/>
<path d="M34.0 340.8H38.5" stroke="#9a9a9a" stroke-width="1"/>
<path d="M36.0 330.3H38.5" stroke="#a8a8a8" stroke-width="1"/>
<path d="M36.0 319.8H38.5" stroke="#a8a8a8" stroke-width="1"/>
<path d="M38.5 309.2H443.5" stroke="#c9c7c5" stroke-width="1"/>
<path d="M34.0 309.2H38.5" stroke="#9a9a9a" stroke-width="1"/>
<path d="M36.0 298.7H38.5" stroke="#a8a8a8" stroke-width="1"/>
<path d="M36.0 288.1H38.5" stroke="#a8a8a8" stroke-width="1"/>
<path d="M38.5 277.6H443.5" stroke="#c9c7c5" stroke-width="1"/>
<path d="M34.0 277.6H38.5" stroke="#9a9a9a" stroke-width="1"/>
<path d="M36.0 267.0H38.5" stroke="#a8a8a8" stroke-width="1"/>
<path d="M36.0 256.5H38.5" stroke="#a8a8a8" stroke-width="1"/>
<path d="M38.5 245.9H443.5" stroke="#c9c7c5" stroke-width="1"/>
<path d="M34.0 245.9H38.5" stroke="#9a9a9a" stroke-width="1"/>
<path d="M36.0 235.4H38.5" stroke="#a8a8a8" stroke-width="1"/>
<path d="M36.0 224.9H38.5" stroke="#a8a8a8" stroke-width="1"/>
<path d="M38.5 214.3H443.5" stroke="#c9c7c5" stroke-width="1"/>
<path d="M34.0 214.3H38.5" stroke="#9a9a9a" stroke-width="1"/>
<path d="M36.0 203.8H38.5" stroke="#a8a8a8" stroke-width="1"/>
<path d="M36.0 193.2H38.5" stroke="#a8a8a8" stroke-width="1"/>
<path d="M38.5 182.7H443.5" stroke="#c9c7c5" stroke-width="1"/>
<path d="M34.0 182.7H38.5" stroke="#9a9a9a" stroke-width="1"/>
<path d="M36.0 172.1H38.5" stroke="#a8a8a8" stroke-width="1"/>
<path d="M36.0 161.6H38.5" stroke="#a8a8a8" stroke-width="1"/>
<path d="M38.5 151.0H443.5" stroke="#c9c7c5" stroke-width="1"/>
<path d="M34.0 151.0H38.5" stroke="#9a9a9a" stroke-width="1"/>
<path d="M36.0 140.5H38.5" stroke="#a8a8a8" stroke-width="1"/>
<path d="M36.0 130.0H38.5" stroke="#a8a8a8" stroke-width="1"/>
<path d="M38.5 119.4H443.5" stroke="#c9c7c5" stroke-width="1"/>
<path d="M34.0 119.4H38.5" stroke="#9a9a9a" stroke-width="1"/>
<path d="M36.0 108.9H38.5" stroke="#a8a8a8" stroke-width="1"/>
<path d="M36.0 98.3H38.5" stroke="#a8a8a8" stroke-width="1"/>
<path d="M38.5 87.8H443.5" stroke="#c9c7c5" stroke-width="1"/>
<path d="M34.0 87.8H38.5" stroke="#9a9a9a" stroke-width="1"/>
<path d="M36.0 77.2H38.5" stroke="#a8a8a8" stroke-width="1"/>
<path d="M36.0 66.7H38.5" stroke="#a8a8a8" stroke-width="1"/>
<path d="M38.5 56.2H443.5" stroke="#c9c7c5" stroke-width="1"/>
<path d="M34.0 56.2H38.5" stroke="#9a9a9a" stroke-width="1"/>
<path d="M36.0 45.6H38.5" stroke="#a8a8a8" stroke-width="1"/>
<path d="M36.0 35.1H38.5" stroke="#a8a8a8" stroke-width="1"/>
<path d="M38.5 24.5H443.5" stroke="#c9c7c5" stroke-width="1"/>
<path d="M34.0 24.5H38.5" stroke="#9a9a9a" stroke-width="1"/>
<path d="M36.0 14.0H38.5" stroke="#a8a8a8" stroke-width="1"/>
<path d="M38.5 10.5V499.0H443.5" stroke="#8c8c8c" stroke-width="1.200" fill="none"/>
<path d="M58.4 499.0v2.5" stroke="#9a9a9a" stroke-width="1"/>
<path d="M99.0 499.0v2.5" stroke="#9a9a9a" stroke-width="1"/>
<path d="M139.6 499.0v4.5" stroke="#9a9a9a" stroke-width="1"/>
<path d="M180.2 499.0v2.5" stroke="#9a9a9a" stroke-width="1"/>
<path d="M220.8 499.0v2.5" stroke="#9a9a9a" stroke-width="1"/>
<path d="M261.4 499.0v2.5" stroke="#9a9a9a" stroke-width="1"/>
<path d="M302.0 499.0v2.5" stroke="#9a9a9a" stroke-width="1"/>
<path d="M342.6 499.0v4.5" stroke="#9a9a9a" stroke-width="1"/>
<path d="M383.2 499.0v2.5" stroke="#9a9a9a" stroke-width="1"/>
<path d="M423.8 499.0v2.5" stroke="#9a9a9a" stroke-width="1"/>
<rect x="75.20" y="54.2" width="24.900" height="444.8" fill="#4f81bd" stroke="#4272ac" stroke-width=".8"/>
<rect x="127.70" y="276.3" width="24.900" height="222.7" fill="#9bbb59" stroke="#88a848" stroke-width=".8"/>
<rect x="153.95" y="143.1" width="24.900" height="355.9" fill="#8064a2" stroke="#6e5490" stroke-width=".8"/>
<rect x="180.20" y="130.3" width="24.900" height="368.7" fill="#4bacc6" stroke="#3a98b2" stroke-width=".8"/>
<rect x="277.40" y="54.2" width="24.900" height="444.8" fill="#4f81bd" stroke="#4272ac" stroke-width=".8"/>
<rect x="277.90" y="54.7" width="23.900" height="444.3" fill="url(#hz)"/>
<rect x="303.65" y="167.9" width="24.900" height="331.1" fill="#c0504d" stroke="#a8423f" stroke-width=".8"/>
<rect x="304.15" y="168.4" width="23.900" height="330.6" fill="url(#hz)"/>
<rect x="329.90" y="311.0" width="24.900" height="188.0" fill="#9bbb59" stroke="#88a848" stroke-width=".8"/>
<rect x="330.40" y="311.5" width="23.900" height="187.5" fill="url(#hz)"/>
<rect x="356.15" y="143.1" width="24.900" height="355.9" fill="#8064a2" stroke="#6e5490" stroke-width=".8"/>
<rect x="356.65" y="143.6" width="23.900" height="355.4" fill="url(#hz)"/>
<rect x="382.40" y="130.3" width="24.900" height="368.7" fill="#4bacc6" stroke="#3a98b2" stroke-width=".8"/>
<rect x="382.90" y="130.8" width="23.900" height="368.2" fill="url(#hz)"/>
<path d="M391.5 10.5V499.0" stroke="#d850d0" stroke-width="1.200"/>
<rect x="453.5" y="10" width="180" height="84" fill="#fff" stroke="#c4c4c4" stroke-width="1"/>
<rect x="457.5" y="14.5" width="15.500" height="11" fill="#4f81bd" stroke="#4272ac" stroke-width=".8"/>
<rect x="457.5" y="30.7" width="15.500" height="11" fill="#c0504d" stroke="#a8423f" stroke-width=".8"/>
<rect x="457.5" y="46.9" width="15.500" height="11" fill="#9bbb59" stroke="#88a848" stroke-width=".8"/>
<rect x="457.5" y="63.1" width="15.500" height="11" fill="#8064a2" stroke="#6e5490" stroke-width=".8"/>
<rect x="457.5" y="79.3" width="15.500" height="11" fill="#4bacc6" stroke="#3a98b2" stroke-width=".8"/>
</g></svg>
<div class="t ax" style="left:258px;width:56px;top:750.0px">0</div>
<div class="t ax" style="left:258px;width:56px;top:718.4px">300</div>
<div class="t ax" style="left:258px;width:56px;top:686.7px">600</div>
<div class="t ax" style="left:258px;width:56px;top:655.1px">900</div>
<div class="t ax" style="left:258px;width:56px;top:623.5px">1200</div>
<div class="t ax" style="left:258px;width:56px;top:591.8px">1500</div>
<div class="t ax" style="left:258px;width:56px;top:560.2px">1800</div>
<div class="t ax" style="left:258px;width:56px;top:528.6px">2100</div>
<div class="t ax" style="left:258px;width:56px;top:496.9px">2400</div>
<div class="t ax" style="left:258px;width:56px;top:465.3px">2700</div>
<div class="t ax" style="left:258px;width:56px;top:433.7px">3000</div>
<div class="t ax" style="left:258px;width:56px;top:402.0px">3300</div>
<div class="t ax" style="left:258px;width:56px;top:370.4px">3600</div>
<div class="t ax" style="left:258px;width:56px;top:338.8px">3900</div>
<div class="t ax" style="left:258px;width:56px;top:307.2px">4200</div>
<div class="t ax" style="left:258px;width:56px;top:275.5px">4500</div>
<div class="t" style="left:417px;top:764px">Ore</div>
<div class="t" style="left:614px;top:764px">Waste</div>
<div class="a" style="left:762px;top:269px;width:157px;height:82px;overflow:hidden">
<div class="t" style="left:1.500px;top:2.0px">R9400 | KOM830E_AHS</div>
<div class="t" style="left:1.500px;top:18.2px">R9250 | KOM830E_AHS</div>
<div class="t" style="left:1.500px;top:34.4px">Overflow R9250 | Overflow CAT785D</div>
<div class="t" style="left:1.500px;top:50.6px">EX2500 | KOM830E_AHS</div>
<div class="t" style="left:1.500px;top:66.8px">CAT994 | CAT785D</div>
</div>
<div class="a" style="left:688.500px;top:586px;width:238.500px;height:136.500px;background:#fff;border:1px solid #c9c9cd;border-radius:4px;box-shadow:0 0 2px rgba(0,0,0,.14)"></div>
<div class="t" style="left:793px;top:595px">Waste</div>
<div class="a" style="left:699px;top:615.3px;width:13px;height:13px;background:#4f81bd;border:1px solid #4272ac"></div>
<div class="t" style="left:716px;top:615.1px">R9400 | KOM830E_AHS: 4,219</div>
<div class="a" style="left:699px;top:636.1px;width:13px;height:13px;background:#c0504d;border:1px solid #a8423f"></div>
<div class="t" style="left:716px;top:635.9px">R9250 | KOM830E_AHS: 3,140</div>
<div class="a" style="left:699px;top:656.9px;width:13px;height:13px;background:#9bbb59;border:1px solid #88a848"></div>
<div class="t" style="left:716px;top:656.7px">Overflow R9250 | Overflow CAT785D: 1,783</div>
<div class="a" style="left:699px;top:677.7px;width:13px;height:13px;background:#8064a2;border:1px solid #6e5490"></div>
<div class="t" style="left:716px;top:677.5px">EX2500 | KOM830E_AHS: 3,375</div>
<div class="a" style="left:699px;top:698.5px;width:13px;height:13px;background:#4bacc6;border:1px solid #3a98b2"></div>
<div class="t" style="left:716px;top:698.3px">CAT994 | CAT785D: 3,497</div>
<svg class="a" style="left:677px;top:732px" width="13" height="20" viewBox="0 0 13 20"><path d="M1 1V16.500L4.700 13L7.200 18.800L9.500 17.800L7 12.200H12Z" fill="#fff" stroke="#000" stroke-width="1" stroke-linejoin="round"/></svg>
<div class="a" style="left:936px;top:505px;width:2px;height:11px;background:repeating-linear-gradient(#a0a2aa 0 1px,transparent 1px 2px)"></div>
<!-- right panel -->
<div class="a" style="left:941px;top:235px;width:244px;height:435px;border:1px solid #c6c6cc;background:#ebecf0;border-radius:3px"></div>
<svg class="a" style="left:1165.500px;top:242.500px" width="11" height="12" viewBox="0 0 11 12"><rect x=".5" y=".5" width="10" height="11" fill="#e6e9f2" stroke="#8c8e98"/><rect x="2" y="2.200" width="2.800" height="2.800" fill="#fff" stroke="#3c74dc" stroke-width=".8"/><rect x="6.200" y="2.200" width="2.800" height="2.800" fill="#fff" stroke="#3c74dc" stroke-width=".8"/><rect x="2" y="6.800" width="2.800" height="2.800" fill="#fff" stroke="#3c74dc" stroke-width=".8"/><rect x="6.200" y="6.800" width="2.800" height="2.800" fill="#fff" stroke="#3c74dc" stroke-width=".8"/></svg>
<div class="white" style="left:948px;top:261.500px;width:229px;height:166px;border-color:#bcbcc1"></div>
<div class="a" style="left:984px;top:264.500px;width:175.500px;height:17px;background:#f0f0f3;border:1px solid #d4d4d9"></div>
<svg class="a" style="left:955.500px;top:268.9px" width="5" height="8"><path d="M.5 .5L4 4L.5 7.500Z" fill="#7a7c86"/></svg>
<svg class="a" style="left:970px;top:267.4px" width="11" height="10" viewBox="0 0 11 10"><path d="M0 0h4.200l1 1.800H11V10H0Z" fill="#ff9d1e"/></svg>
<div class="t" style="left:987.500px;top:265.9px">AgentQuantityDividedByCalendarTime</div>
<svg class="a" style="left:955.500px;top:288.8px" width="5" height="8"><path d="M.5 .5L4 4L.5 7.500Z" fill="#7a7c86"/></svg>
<svg class="a" style="left:970px;top:287.3px" width="11" height="10" viewBox="0 0 11 10"><path d="M0 0h4.200l1 1.800H11V10H0Z" fill="#ff9d1e"/></svg>
<div class="t" style="left:987.500px;top:285.8px">Destination</div>
<svg class="a" style="left:955.500px;top:308.6px" width="5" height="8"><path d="M.5 .5L4 4L.5 7.500Z" fill="#7a7c86"/></svg>
<svg class="a" style="left:970px;top:307.1px" width="11" height="10" viewBox="0 0 11 10"><path d="M0 0h4.200l1 1.800H11V10H0Z" fill="#ff9d1e"/></svg>
<div class="t" style="left:987.500px;top:305.6px">DestinationMutexStockpile</div>
<svg class="a" style="left:955.500px;top:328.5px" width="5" height="8"><path d="M.5 .5L4 4L.5 7.500Z" fill="#7a7c86"/></svg>
<svg class="a" style="left:970px;top:327.0px" width="11" height="10" viewBox="0 0 11 10"><path d="M0 0h4.200l1 1.800H11V10H0Z" fill="#ff9d1e"/></svg>
<div class="t" style="left:987.500px;top:325.5px">Drill</div>
<svg class="a" style="left:955.500px;top:348.4px" width="5" height="8"><path d="M.5 .5L4 4L.5 7.500Z" fill="#7a7c86"/></svg>
<svg class="a" style="left:970px;top:346.9px" width="11" height="10" viewBox="0 0 11 10"><path d="M0 0h4.200l1 1.800H11V10H0Z" fill="#ff9d1e"/></svg>
<div class="t" style="left:987.500px;top:345.4px">FinalDestination</div>
<svg class="a" style="left:955.500px;top:368.2px" width="5" height="8"><path d="M.5 .5L4 4L.5 7.500Z" fill="#7a7c86"/></svg>
<svg class="a" style="left:970px;top:366.8px" width="11" height="10" viewBox="0 0 11 10"><path d="M0 0h4.200l1 1.800H11V10H0Z" fill="#ff9d1e"/></svg>
<div class="t" style="left:987.500px;top:365.2px">FlagCrossed</div>
<svg class="a" style="left:955.500px;top:388.1px" width="5" height="8"><path d="M.5 .5L4 4L.5 7.500Z" fill="#7a7c86"/></svg>
<svg class="a" style="left:970px;top:386.6px" width="11" height="10" viewBox="0 0 11 10"><path d="M0 0h4.200l1 1.800H11V10H0Z" fill="#ff9d1e"/></svg>
<div class="t" style="left:987.500px;top:385.1px">FlagState</div>
<svg class="a" style="left:955.500px;top:408.0px" width="5" height="8"><path d="M.5 .5L4 4L.5 7.500Z" fill="#7a7c86"/></svg>
<svg class="a" style="left:970px;top:406.5px" width="11" height="10" viewBox="0 0 11 10"><path d="M0 0h4.200l1 1.800H11V10H0Z" fill="#ff9d1e"/></svg>
<div class="t" style="left:987.500px;top:405.0px">HaulageResult</div>
<svg class="a" style="left:1164px;top:267px" width="9" height="6"><path d="M.5 5L4.500 1L8.500 5Z" fill="#8a8c94"/></svg>
<svg class="a" style="left:1164px;top:417px" width="9" height="6"><path d="M.5 1L4.500 5L8.500 1Z" fill="#8a8c94"/></svg>
<div class="a" style="left:1165.500px;top:278px;width:6.500px;height:14.500px;border:1px solid #a4a6ae;border-radius:3px;background:#e4e4e9"></div>
<div class="a" style="left:1057px;top:429px;width:11px;height:2px;background:repeating-linear-gradient(90deg,#a0a2aa 0 1px,transparent 1px 2px)"></div>
<div class="t" style="left:950.500px;top:435px">Drag fields between areas below:</div>
<svg class="a" style="left:950px;top:455px" width="11" height="11"><path d="M.5 1h10L6.700 5.500V10L4.300 8.500V5.500Z" fill="#4a4c54"/></svg>
<div class="t" style="left:965.500px;top:454px">Filter Area</div>
<svg class="a" style="left:1067.500px;top:455px" width="14" height="10" viewBox="0 0 14 10"><g fill="#f09a28"><rect x="0" y="0" width="3.600" height="2.600"/><rect x="4.800" y="0" width="3.600" height="2.600"/><rect x="9.600" y="0" width="3.600" height="2.600"/></g><g fill="#a8aab2"><rect x="0" y="3.600" width="3.600" height="2.600"/><rect x="4.800" y="3.600" width="3.600" height="2.600"/><rect x="9.600" y="3.600" width="3.600" height="2.600"/><rect x="0" y="7.200" width="3.600" height="2.600"/><rect x="4.800" y="7.200" width="3.600" height="2.600"/><rect x="9.600" y="7.200" width="3.600" height="2.600"/></g></svg>
<div class="t" style="left:1085px;top:454px">Column Area</div>
<div class="white" style="left:948px;top:472px;width:110px;height:71.500px;border-color:#bcbcc1"></div>
<div class="white" style="left:1067px;top:472px;width:110.500px;height:71.500px;border-color:#bcbcc1"></div>
<div class="a fld" style="left:1069px;top:474px;width:106.500px;height:16.500px"></div><div class="t" style="left:1074px;top:475.500px">MutexParcel.Haul...</div>
<svg class="a" style="left:1166px;top:476px" width="7" height="7"><path d="M.8 .8h5.400L4 3.500V6.200L3 5.800V3.500Z" fill="#c4dcf8" stroke="#7aa8e4" stroke-width=".7"/></svg>
<svg class="a" style="left:948.500px;top:551px" width="14" height="10" viewBox="0 0 14 10"><g fill="#f09a28"><rect x="0" y="0" width="3.600" height="2.600"/><rect x="0" y="3.600" width="3.600" height="2.600"/><rect x="0" y="7.200" width="3.600" height="2.600"/></g><g fill="#a8aab2"><rect x="4.800" y="0" width="3.600" height="2.600"/><rect x="9.600" y="0" width="3.600" height="2.600"/><rect x="4.800" y="3.600" width="3.600" height="2.600"/><rect x="9.600" y="3.600" width="3.600" height="2.600"/><rect x="4.800" y="7.200" width="3.600" height="2.600"/><rect x="9.600" y="7.200" width="3.600" height="2.600"/></g></svg>
<div class="t" style="left:965.500px;top:549.500px">Row Area</div>
<svg class="a" style="left:1069px;top:550px" width="11" height="12"><path d="M10 1.500H1.500L6 6L1.500 10.500H10" fill="none" stroke="#4a80d8" stroke-width="1.500"/></svg>
<div class="t" style="left:1084.500px;top:549.500px">Data Area</div>
<div class="white" style="left:948px;top:566px;width:110px;height:72px;border-color:#bcbcc1"></div>
<div class="white" style="left:1067px;top:566px;width:110.500px;height:72px;border-color:#bcbcc1"></div>
<div class="a fld" style="left:950px;top:568.500px;width:106px;height:16.500px"></div><div class="t" style="left:954.500px;top:570px">Loader</div>
<div class="a fld" style="left:950px;top:587px;width:106px;height:17px"></div><div class="t" style="left:954.500px;top:589px">Truck</div>
<div class="a fld" style="left:1069px;top:568.500px;width:106.500px;height:16.500px"></div><div class="t" style="left:1073.500px;top:570px">HaulageResult.Load...</div>
<div class="a cb" style="left:949.500px;top:648.500px"></div><div class="t" style="left:963.500px;top:647px">Defer Layout Update</div>
<div class="btn" style="left:1138px;top:644px;width:40px;height:19.500px;border-color:#c2c2c7"></div><div class="t" style="left:1141px;top:647px;color:#a4a6ae">Update</div>
<div class="a" style="left:941px;top:675px;width:244px;height:111.500px;border:1px solid #c6c6cc;background:#ebecf0;border-radius:3px;overflow:hidden"><div class="a" style="left:0;top:0;width:242px;height:17px;background:linear-gradient(#f4f4f6,#e2e2e7)"></div></div>
<div class="t" style="left:951.500px;top:677px">Chart Options</div>
<div class="t" style="left:951.500px;top:701px">Chart Type:</div>
<div class="white" style="left:951.500px;top:716.500px;width:222.500px;height:17.500px;border-color:#b4b4b9"></div><div class="t" style="left:954.500px;top:718.500px">Bar</div>
<svg class="a" style="left:1162.500px;top:723px" width="7" height="4"><path d="M0 0h7L3.500 4Z" fill="#1e1e1e"/></svg>
<div class="a cb" style="left:953px;top:741.500px"></div><div class="t" style="left:967.500px;top:740px">Show Labels</div>
<div class="a cb" style="left:953px;top:762px"></div><div class="t" style="left:967.500px;top:761px">Show Column as Series</div>
</body></html>
